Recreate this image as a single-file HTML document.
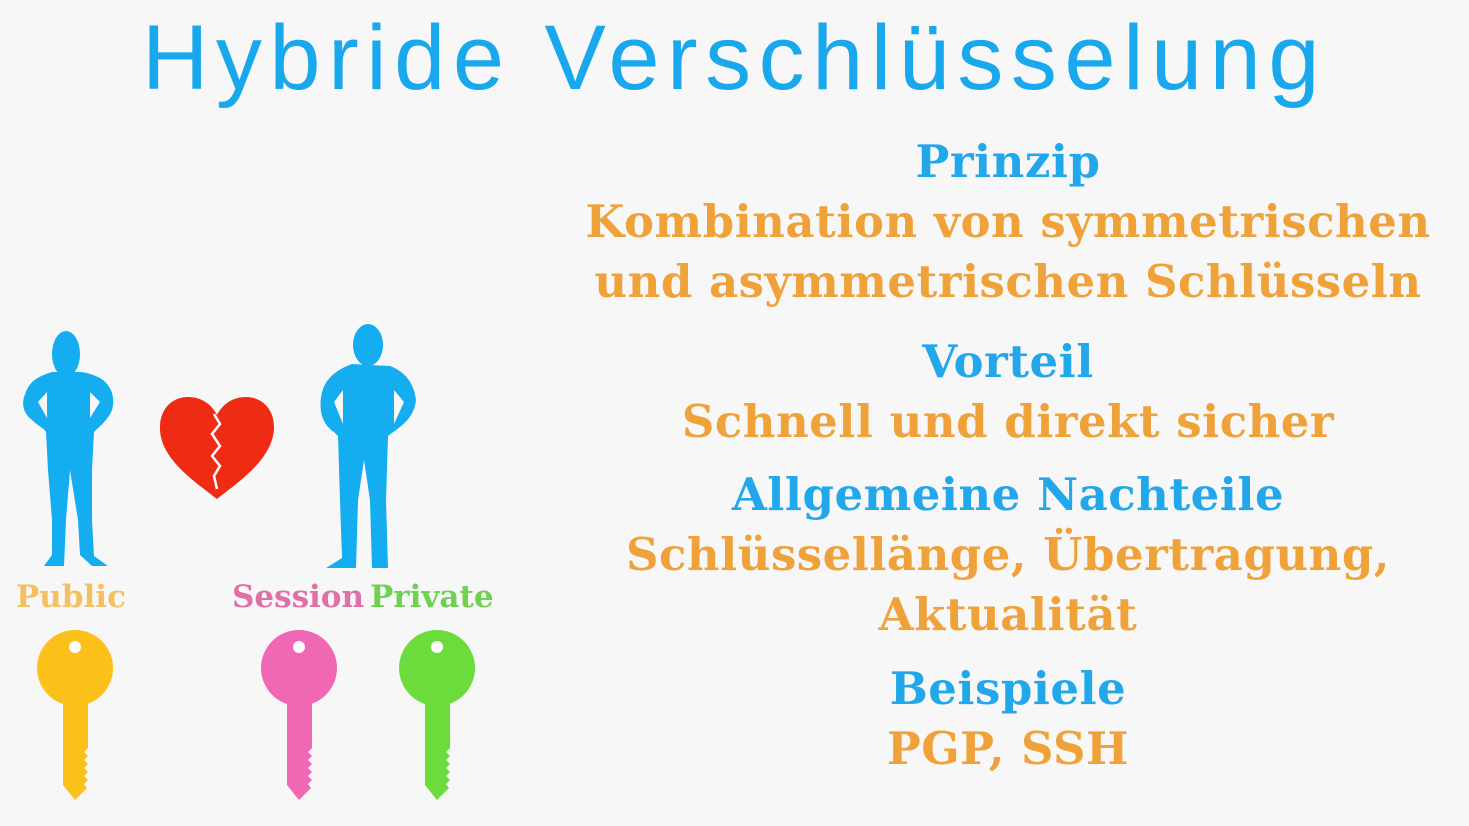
<!DOCTYPE html>
<html><head><meta charset="utf-8"><style>
body{margin:0;width:1469px;height:826px;background:#f7f7f8;overflow:hidden;position:relative;font-family:"DejaVu Serif",serif}
.t{position:absolute;left:0;width:1469px;text-align:center;font-family:"Liberation Sans",sans-serif;font-size:92px;color:#1aa8ec;top:6px;letter-spacing:7.5px}
.l{position:absolute;left:510px;width:996px;text-align:center;font-weight:bold;white-space:nowrap;font-size:45px;line-height:52px;letter-spacing:0.5px}
.b{color:#22a8ea}.o{color:#f0a23a}
.k{position:absolute;font-weight:bold;font-size:31px}
</style></head><body>
<div class="t">Hybride Verschlüsselung</div>
<div class="l b" style="top:136px">Prinzip</div>
<div class="l o" style="top:196px">Kombination von symmetrischen</div>
<div class="l o" style="top:256px">und asymmetrischen Schlüsseln</div>
<div class="l b" style="top:336px">Vorteil</div>
<div class="l o" style="top:396px">Schnell und direkt sicher</div>
<div class="l b" style="top:469px">Allgemeine Nachteile</div>
<div class="l o" style="top:529px">Schlüssellänge, Übertragung,</div>
<div class="l o" style="top:589px">Aktualität</div>
<div class="l b" style="top:663px">Beispiele</div>
<div class="l o" style="top:723px">PGP, SSH</div>
<div class="k" style="left:16px;top:579px;color:#f4c060">Public</div>
<div class="k" style="left:232px;top:579px;color:#e070a8">Session</div>
<div class="k" style="left:370px;top:579px;color:#70d050">Private</div>
<svg width="520" height="826" style="position:absolute;left:0;top:0">
<g fill="#14adf0" fill-rule="evenodd">
<ellipse cx="66" cy="354" rx="14" ry="23"/>
<path d="M52 372C40 376 30 380 26 392C20 404 24 414 32 420C38 426 44 428 46 432L48 470L52 520L52 555L44 566L64 566L66 520L70 470L78 520L80 555L92 566L108 566L94 556L92 520L92 470L94 432C100 426 108 420 112 410C116 396 110 384 100 378C92 374 84 372 80 372ZM38 402L47 392L47 418ZM100 402L90 392L90 418Z"/>
<ellipse cx="368" cy="345" rx="15" ry="21"/>
<path d="M352 364C336 370 326 378 322 392C318 410 322 424 334 432L338 436L340 500L342 558L326 568L356 568L358 500L364 460L370 500L372 568L388 568L386 500L388 436C398 428 414 420 416 400C414 384 406 372 390 366ZM334 402L343 390L343 424ZM404 402L394 390L394 424Z"/>
</g>
<path d="M217 499c-20-16-58-40-57-72 0-18 12-30 28-30 14 0 24 8 29 18 5-10 15-18 29-18 16 0 28 12 28 30 0 32-37 56-57 72z" fill="#ee2c14"/>
<path d="M214 414l6 10-8 10 8 12-8 10 8 10-6 10 3 13" stroke="#fff" stroke-width="2.5" fill="none"/>
<g fill="#fbc01a">
<circle cx="75" cy="668" r="38"/>
<path d="M63 690V785L75 800L87 788L84 784L88 780L84 776L88 772L84 768L88 764L84 760L88 756L84 752L88 748V690Z"/>
</g>
<g transform="translate(224 0)" fill="#f068b4">
<circle cx="75" cy="668" r="38"/>
<path d="M63 690V785L75 800L87 788L84 784L88 780L84 776L88 772L84 768L88 764L84 760L88 756L84 752L88 748V690Z"/>
</g>
<g transform="translate(362 0)" fill="#6cdc3c">
<circle cx="75" cy="668" r="38"/>
<path d="M63 690V785L75 800L87 788L84 784L88 780L84 776L88 772L84 768L88 764L84 760L88 756L84 752L88 748V690Z"/>
</g>
<circle cx="75" cy="647" r="6" fill="#fff"/><circle cx="299" cy="647" r="6" fill="#fff"/><circle cx="437" cy="647" r="6" fill="#fff"/>
</svg>
</body></html>
